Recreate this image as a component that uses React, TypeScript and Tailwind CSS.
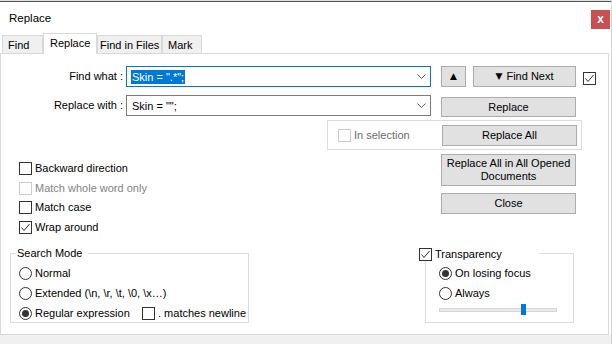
import React from "react";

function Check({ checked, disabled }: { checked?: boolean; disabled?: boolean }) {
  return (
    <span
      className={`flex h-[13px] w-[13px] shrink-0 items-center justify-center border bg-white ${
        disabled ? "border-[#cccccc]" : "border-[#333333]"
      }`}
    >
      {checked && (
        <svg width="11" height="11" viewBox="0 0 11 11">
          <path d="M1.5 5.5 L4 8.5 L9.5 2" fill="none" stroke="#333333" strokeWidth="1" />
        </svg>
      )}
    </span>
  );
}

function Radio({ checked }: { checked?: boolean }) {
  return (
    <span className="flex h-[13px] w-[13px] shrink-0 items-center justify-center rounded-full border border-[#333333] bg-white">
      {checked && <span className="h-[7px] w-[7px] rounded-full bg-[#333333]" />}
    </span>
  );
}

function Btn({ children, className = "" }: { children: React.ReactNode; className?: string }) {
  return (
    <div
      className={`flex shrink-0 items-center justify-center border border-[#adadad] bg-[#e1e1e1] text-center text-black ${className}`}
    >
      {children}
    </div>
  );
}

function Combo({ text, focused }: { text: string; focused?: boolean }) {
  return (
    <div
      className={`ml-[3px] flex h-[21px] w-[305px] items-center border bg-white pl-[4px] pr-[4px] ${
        focused ? "border-[#0078d7]" : "border-[#7a7a7a]"
      }`}
    >
      <span className={`px-px leading-[14px] ${focused ? "bg-[#0078d7] text-white" : ""}`}>{text}</span>
      <svg className="ml-auto" width="9" height="6" viewBox="0 0 9 6">
        <path d="M0.5 0.5 L4.5 4.5 L8.5 0.5" fill="none" stroke="#606060" strokeWidth="1" />
      </svg>
    </div>
  );
}

const tabs = [
  { label: "Find", w: "w-[41px] pl-[5px]" },
  { label: "Replace", w: "w-[54px] pl-[6px]", active: true },
  { label: "Find in Files", w: "w-[65px] pl-[2px]" },
  { label: "Mark", w: "w-[40px] pl-[5px]" },
];

export default function App() {
  return (
    <div className="flex h-[344px] w-[612px] flex-col overflow-hidden border-r border-[#d4d4d4] bg-white font-['Liberation_Sans',Arial,sans-serif] text-[11px] text-black">
      <div className="h-px bg-[#e2e2e2]" />
      <div className="h-px bg-[#555555]" />

      {/* title bar */}
      <div className="flex h-[31px] items-start">
        <div className="mt-[9px] pl-[9px] text-[11.5px] leading-[14px]">Replace</div>
        <div className="ml-auto mr-[1px] mt-[8px] flex h-[19px] w-[19px] items-center justify-center bg-[#c75050] pb-[2px] text-[12px] font-bold text-white">
          x
        </div>
      </div>

      {/* tabs */}
      <div className="relative z-10 flex h-[20px] items-end pl-[2px]">
        {tabs.map((t) =>
          t.active ? (
            <div
              key={t.label}
              className={`-mb-px flex h-[21px] ${t.w} shrink-0 items-start whitespace-nowrap border border-b-0 border-[#d9d9d9] bg-white pt-[2px] leading-[14px]`}
            >
              {t.label}
            </div>
          ) : (
            <div
              key={t.label}
              className={`flex h-[18px] ${t.w} shrink-0 items-center overflow-hidden whitespace-nowrap border border-b-0 border-[#d9d9d9] bg-[#f0f0f0] leading-[14px]`}
            >
              {t.label}
            </div>
          )
        )}
      </div>

      {/* panel */}
      <div className="flex h-[282px] w-[609px] flex-col border border-[#d9d9d9] bg-white">
        {/* find what */}
        <div className="mt-[12px] flex h-[21px] items-center">
          <div className="w-[122px] text-right">Find what :</div>
          <Combo text={'Skin = ".*";'} focused />
          <Btn className="ml-[10px] h-[21px] w-[25px] text-[9px] font-['DejaVu_Sans',sans-serif]">▲</Btn>
          <Btn className="ml-[7px] h-[21px] w-[103px]">
            <span className="mr-[4px] font-['DejaVu_Sans',sans-serif] text-[9px]">▼</span>Find Next
          </Btn>
          <div className="ml-[7px] mt-[3px]">
            <Check checked />
          </div>
        </div>

        {/* replace with */}
        <div className="mt-[8px] flex items-start">
          <div className="flex h-[21px] w-[122px] items-center justify-end">Replace with :</div>
          <Combo text={'Skin = "";'} />
          <Btn className="ml-[10px] mt-[2px] h-[20px] w-[135px]">Replace</Btn>
        </div>

        {/* in selection */}
        <div className="ml-[326px] mt-[3px] flex h-[30px] w-[255px] items-center border border-[#dcdcdc]">
          <div className="ml-[10px] flex items-center gap-[3px] text-[#6d6d6d]">
            <Check disabled />
            <span>In selection</span>
          </div>
          <Btn className="ml-auto mr-[4px] h-[21px] w-[135px]">Replace All</Btn>
        </div>

        {/* lower */}
        <div className="flex">
          <div className="flex w-[418px] flex-col">
            <div className="mt-[9px] flex flex-col pl-[18px]">
              <div className="flex h-[19px] items-center gap-[3px]">
                <Check />
                <span>Backward direction</span>
              </div>
              <div className="flex h-[20px] items-center gap-[3px] text-[#838383]">
                <Check disabled />
                <span>Match whole word only</span>
              </div>
              <div className="flex h-[19px] items-center gap-[3px]">
                <Check />
                <span>Match case</span>
              </div>
              <div className="flex h-[20px] items-center gap-[3px]">
                <Check checked />
                <span>Wrap around</span>
              </div>
            </div>

            <div className="relative ml-[9px] mt-[16px] h-[70px] w-[239px] border border-[#dcdcdc] pl-[8px] pt-[9px]">
              <div className="absolute left-[5px] top-[-8px] bg-white pl-px pr-[6px] leading-[14px]">Search Mode</div>
              <div className="flex h-[20px] items-center gap-[3px]">
                <Radio />
                <span>Normal</span>
              </div>
              <div className="flex h-[20px] items-center gap-[3px]">
                <Radio />
                <span>{"Extended (\\n, \\r, \\t, \\0, \\x…)"}</span>
              </div>
              <div className="flex h-[20px] items-center">
                <div className="flex w-[123px] items-center gap-[3px]">
                  <Radio checked />
                  <span>Regular expression</span>
                </div>
                <div className="flex items-center gap-[3px]">
                  <Check />
                  <span>. matches newline</span>
                </div>
              </div>
            </div>
          </div>

          <div className="flex flex-col">
            <Btn className="ml-[22px] mt-[4px] h-[32px] w-[135px] leading-[13px]">
              Replace All in All Opened
              <br />
              Documents
            </Btn>
            <Btn className="ml-[22px] mt-[7px] h-[21px] w-[135px]">Close</Btn>

            <div className="relative ml-[6px] mt-[39px] h-[70px] w-[149px] border border-[#dcdcdc] pl-[13px] pt-[9px]">
              <div className="absolute left-[-7px] top-[-6px] flex h-[13px] w-[120px] items-center gap-[3px] bg-white">
                <Check checked />
                <span>Transparency</span>
              </div>
              <div className="flex h-[20px] items-center gap-[3px]">
                <Radio checked />
                <span>On losing focus</span>
              </div>
              <div className="flex h-[20px] items-center gap-[3px]">
                <Radio />
                <span>Always</span>
              </div>
              <div className="relative mt-[5px] h-[4px] w-[118px] border border-[#d6d6d6] bg-[#e7eaea]">
                <div className="absolute left-[81px] top-[-5px] h-[11px] w-[5px] bg-[#0078d7]" />
              </div>
            </div>
          </div>
        </div>
      </div>

      <div className="flex-1 bg-[#f0f0f0]" />
    </div>
  );
}
